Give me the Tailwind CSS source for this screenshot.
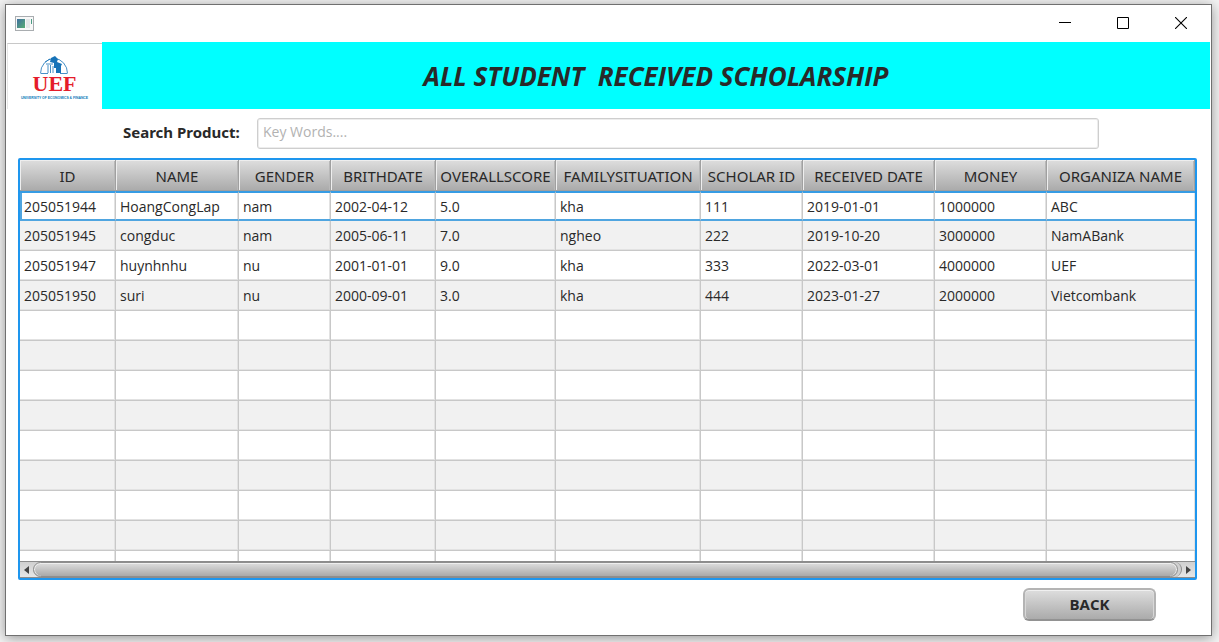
<!DOCTYPE html>
<html lang="en">
<head>
<meta charset="utf-8">
<title>All student received scholarship</title>
<script src="https://cdn.jsdelivr.net/npm/@tailwindcss/browser@4"></script>
</head>
<body class="h-screen overflow-hidden bg-[#f4f4f4] pt-1 pr-[7px] pb-[6px] pl-[5px] font-['Open_Sans','Noto_Sans',sans-serif] text-[14px] text-[#292929]">
<main class="flex h-full flex-col border border-[#707070] bg-white pr-px shadow-[0_2px_12px_rgba(0,0,0,0.4)]">
  <div class="flex h-[37px] shrink-0 items-center justify-between pl-[9px]">
    <svg class="h-4 w-5" viewBox="0 0 20 16" aria-hidden="true">
      <defs><linearGradient id="app" x2="1" y2="1"><stop stop-color="#3f6fa0"/><stop offset="1" stop-color="#58ad72"/></linearGradient></defs>
      <rect x=".5" y=".5" width="18" height="14" fill="#f8f8f8" stroke="#a9adb0"/>
      <rect x="2" y="3" width="8" height="9" fill="url(#app)"/><path d="M11 3h4v9h-4z" fill="#e4e7e8"/><path d="M16.500 3v5" stroke="#4b9b84"/>
    </svg>
    <div class="flex pb-0.5">
      <button aria-label="Minimize" class="flex h-[34px] w-[58px] items-center justify-center"><svg class="h-3 w-3" viewBox="0 0 12 12"><path d="M0 5.500h12" stroke="#000"/></svg></button>
      <button aria-label="Maximize" class="flex h-[34px] w-[58px] items-center justify-center"><svg class="h-3 w-3" viewBox="0 0 12 12"><path d="M.5.5h11v11H.5z" fill="none" stroke="#000"/></svg></button>
      <button aria-label="Close" class="flex h-[34px] w-[58px] items-center justify-center"><svg class="h-3 w-3" viewBox="0 0 12 12"><path d="M0 0l12 12M12 0L0 12" stroke="#000" stroke-width="1.100"/></svg></button>
    </div>
  </div>
  <header class="flex h-[67px] shrink-0 pl-px">
    <div class="mt-px w-[95px] shrink-0 border-t border-l border-[#c8c8c8] border-l-[#e6e6e6]">
      <svg class="h-[65px] w-[94px]" viewBox="0 0 94 65" role="img" aria-label="UEF University of Economics and Finance">
        <g fill="none" stroke="#1673b8">
          <path d="M32.500 29.500A13.500 15 0 1 1 59.500 29.500" stroke-width=".8"/>
          <path d="M33 29.500h7M52 29.500h7M40 29v-8M42.500 29v-8M45 29v-7M38 20h7M37 18l5-3" stroke-width=".8"/>
        </g>
        <path d="M43 14l4-2 3 3-1 3 5 2-1 2v7h-5v-5h-2V19l-4-1z" fill="#1673b8"/>
        <text x="46.500" y="47" text-anchor="middle" font-family="Liberation Serif" font-weight="700" font-size="22" fill="#e51c2a">UEF</text>
        <text x="46.500" y="55" text-anchor="middle" font-family="Liberation Sans" font-weight="700" font-size="3.400" fill="#0878b8">UNIVERSITY OF ECONOMICS &amp; FINANCE</text>
      </svg>
    </div>
    <h1 class="flex flex-1 items-center justify-center bg-[#00ffff] pt-[2px] text-[26px] font-bold whitespace-pre italic">ALL STUDENT  RECEIVED SCHOLARSHIP</h1>
  </header>
  <div class="flex shrink-0 items-center pt-[9px] pr-[111px] pb-[9px] pl-[117px]">
    <label for="search" class="w-[134px] shrink-0 pb-[2px] font-['Noto_Sans',sans-serif] text-[15px] font-bold">Search Product:</label>
    <input id="search" type="text" placeholder="Key Words...." class="h-[31px] min-w-0 flex-1 rounded-[3px] border border-[#cecece] bg-white px-[5px] pb-1 text-[14px] shadow-[inset_0_0_0_1px_#ededed] outline-none placeholder:text-[#b2b2b2]">
  </div>
  <section class="mr-[13px] ml-3 flex min-h-0 flex-1 flex-col rounded-[2px] border-2 border-[#1e96ee]">
    <div class="min-h-0 flex-1 overflow-hidden">
    <table class="w-full table-fixed border-separate border-spacing-0 [&_td]:h-[30px] [&_td]:border-r [&_td]:border-b [&_td]:border-[#c8c8c8] [&_td]:p-0 [&_td]:pl-1 [&_td]:whitespace-nowrap [&_td]:shadow-[inset_-1px_0_0_#e2e2e2,inset_0_-1px_0_#e2e2e2] [&_td:last-child]:border-r-0 [&_th]:h-[31px] [&_th]:overflow-hidden [&_th]:border-r [&_th]:border-b [&_th]:border-[#a0a0a0] [&_th]:bg-linear-to-b [&_th]:from-[#dedede] [&_th]:to-[#ababab] [&_th]:p-0 [&_th]:pt-[2px] [&_th]:text-center [&_th]:font-['Noto_Sans',sans-serif] [&_th]:text-[15px] [&_th]:font-normal [&_th]:whitespace-nowrap [&_th]:shadow-[inset_1px_1px_0_#eeeeee,inset_-1px_0_0_#b8b8b8] [&_tbody_tr:nth-child(even)]:bg-[#f1f1f1]">
      <colgroup><col class="w-[96px]"><col class="w-[123px]"><col class="w-[92px]"><col class="w-[105px]"><col class="w-[120px]"><col class="w-[145px]"><col class="w-[102px]"><col class="w-[132px]"><col class="w-[112px]"><col></colgroup>
      <thead><tr><th>ID</th><th>NAME</th><th>GENDER</th><th>BRITHDATE</th><th>OVERALLSCORE</th><th>FAMILYSITUATION</th><th>SCHOLAR ID</th><th>RECEIVED DATE</th><th>MONEY</th><th>ORGANIZA NAME</th></tr></thead>
      <tbody>
        <tr class="[&_td]:border-t-2 [&_td]:border-b-2 [&_td]:border-t-[#369ce4] [&_td]:border-b-[#4fa5e0] [&_td]:shadow-[inset_-1px_0_0_#e2e2e2] [&_td:first-child]:shadow-[inset_2px_0_0_#4fa5e0,inset_-1px_0_0_#e2e2e2]"><td>205051944</td><td>HoangCongLap</td><td>nam</td><td>2002-04-12</td><td>5.0</td><td>kha</td><td>111</td><td>2019-01-01</td><td>1000000</td><td>ABC</td></tr>
        <tr><td>205051945</td><td>congduc</td><td>nam</td><td>2005-06-11</td><td>7.0</td><td>ngheo</td><td>222</td><td>2019-10-20</td><td>3000000</td><td>NamABank</td></tr>
        <tr><td>205051947</td><td>huynhnhu</td><td>nu</td><td>2001-01-01</td><td>9.0</td><td>kha</td><td>333</td><td>2022-03-01</td><td>4000000</td><td>UEF</td></tr>
        <tr><td>205051950</td><td>suri</td><td>nu</td><td>2000-09-01</td><td>3.0</td><td>kha</td><td>444</td><td>2023-01-27</td><td>2000000</td><td>Vietcombank</td></tr>
        <tr><td></td><td></td><td></td><td></td><td></td><td></td><td></td><td></td><td></td><td></td></tr>
        <tr><td></td><td></td><td></td><td></td><td></td><td></td><td></td><td></td><td></td><td></td></tr>
        <tr><td></td><td></td><td></td><td></td><td></td><td></td><td></td><td></td><td></td><td></td></tr>
        <tr><td></td><td></td><td></td><td></td><td></td><td></td><td></td><td></td><td></td><td></td></tr>
        <tr><td></td><td></td><td></td><td></td><td></td><td></td><td></td><td></td><td></td><td></td></tr>
        <tr><td></td><td></td><td></td><td></td><td></td><td></td><td></td><td></td><td></td><td></td></tr>
        <tr><td></td><td></td><td></td><td></td><td></td><td></td><td></td><td></td><td></td><td></td></tr>
        <tr><td></td><td></td><td></td><td></td><td></td><td></td><td></td><td></td><td></td><td></td></tr>
        <tr><td></td><td></td><td></td><td></td><td></td><td></td><td></td><td></td><td></td><td></td></tr>
      </tbody>
    </table>
    </div>
    <div class="flex h-[17px] shrink-0 items-stretch border-y border-[#8c8c8c] bg-linear-to-b from-[#d0d0d0] to-[#e6e6e6]">
      <button aria-label="Scroll left" class="flex w-[13px] items-center justify-center"><svg class="h-2 w-[5px]" viewBox="0 0 5 8"><path d="M5 0v8L0 4z" fill="#444"/></svg></button>
      <div class="flex flex-1 rounded-full border-r border-[#8e8e8e] bg-[#d0d0d0] pr-[3px]"><div class="flex-1 rounded-full border border-[#8e8e8e] bg-linear-to-b from-[#dedede] to-[#a9a9a9] shadow-[inset_0_1px_0_#eeeeee,inset_1px_0_0_#eeeeee,inset_-1px_0_0_#eeeeee]"></div></div>
      <button aria-label="Scroll right" class="flex w-[13px] items-center justify-center"><svg class="h-2 w-[5px]" viewBox="0 0 5 8"><path d="M0 0v8l5-4z" fill="#444"/></svg></button>
    </div>
  </section>
  <footer class="flex shrink-0 justify-end pt-2 pr-[54px] pb-[14px]">
    <button class="h-[33px] w-[133px] rounded-[6px] border-2 border-[#b4b4b4] border-b-[#929292] bg-linear-to-b from-[#dedede] to-[#ababab] text-[15px] font-bold shadow-[inset_0_1px_0_#f0f0f0,inset_1px_0_0_#d8d8d8,inset_-1px_0_0_#d8d8d8]">BACK</button>
  </footer>
</main>
</body>
</html>
